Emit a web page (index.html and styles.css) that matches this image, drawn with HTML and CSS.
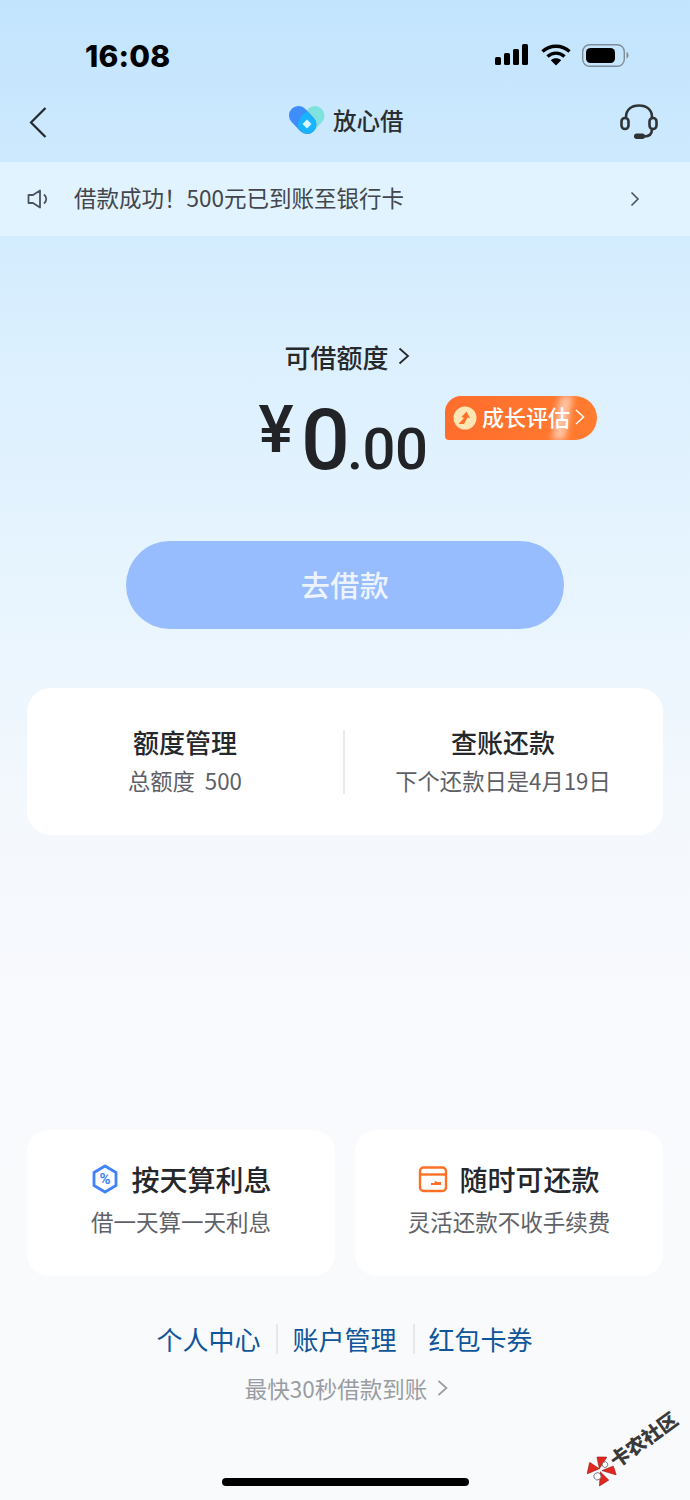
FILE: index.html
```html
<!DOCTYPE html>
<html lang="zh">
<head>
<meta charset="utf-8">
<title>放心借</title>
<link rel="stylesheet" href="styles.css">
</head>
<body>
<div class="page">
  <div class="status">
    <span class="time">16:08</span>
    <div class="status-icons">
      <svg width="34" height="22" viewBox="0 0 34 22"><g fill="#000"><rect x="0" y="13" width="6" height="8" rx="1.5"/><rect x="9" y="9" width="6" height="12" rx="1.5"/><rect x="18" y="5" width="6" height="16" rx="1.500"/><rect x="27" y="0" width="6" height="21" rx="1.500"/></g></svg>
      <svg class="wifi" width="30" height="22" viewBox="0 0 30 22"><g fill="none" stroke="#000" stroke-width="3.400"><path d="M1.500 7.500C9 .5 21 .5 28.500 7.500"/><path d="M6.500 12.500C11.500 8 18.500 8 23.500 12.500"/></g><path d="M9.800 16.200C13 13.600 17 13.600 20.200 16.200L15 21.500Z" fill="#000"/></svg>
      <svg class="batt" width="48" height="24" viewBox="0 0 48 24"><rect x=".7" y=".7" width="41.600" height="21.600" rx="7" fill="none" stroke="#7f8c99" stroke-width="1.400"/><rect x="4" y="4" width="29" height="15" rx="4.500" fill="#000"/><path d="M44.500 8v6.500c1.500-.5 2-2 2-3.200s-.5-2.800-2-3.300z" fill="#7f8c99"/></svg>
    </div>
  </div>

  <nav class="nav">
    <svg class="nav-back" width="20" height="32" viewBox="0 0 20 32"><path d="M17.500 2 3 16.500 17.500 31" fill="none" stroke="#25282c" stroke-width="2.200"/></svg>
    <div class="brand">
      <svg width="36" height="28" viewBox="0 0 36 28">
        <path d="M26 9.500 18 18.500" stroke="#7de3dc" stroke-width="19" stroke-linecap="round"/>
        <path d="M9.500 9.500 18 18.500" stroke="#3f8cfb" stroke-width="19" stroke-linecap="round"/>
        <path d="M18 5.500 26.500 14.500C28 19 27 24 22.500 26.500 19 28.300 15 27.600 12.500 25.500L9.200 22C8.500 17 9.500 11 18 5.500Z" fill="#19b4ff"/>
        <path d="M18 13.500 22.500 18 18 22.500 13.500 18Z" fill="#d9f6ff"/>
      </svg>
      <span class="brand-name">放心借</span>
    </div>
    <svg class="nav-help" width="38" height="36" viewBox="0 0 38 36"><g fill="none" stroke="#2f3336" stroke-width="2.600"><path d="M6 14V13C6 6 11 1.500 19 1.500S32 6 32 13v1"/><rect x="1.500" y="14" width="7" height="11" rx="3.500"/><rect x="29.500" y="14" width="7" height="11" rx="3.500"/><path d="M32 25c0 5-3 7.500-8 7.500"/></g><rect x="14" y="29.500" width="11" height="5.500" rx="2.700" fill="#2f3336"/></svg>
  </nav>

  <div class="notice">
    <svg width="22" height="20" viewBox="0 0 22 20"><path d="M1.500 6H6L13 1.500V18.500L6 14H1.500Z" fill="none" stroke="#4b5263" stroke-width="1.800" stroke-linejoin="round"/><path d="M17 5.500C20 8 20 12 17 14.500" fill="none" stroke="#4b5263" stroke-width="1.800"/></svg>
    <span class="notice-text">借款成功！500元已到账至银行卡</span>
    <svg class="chev-s" width="10" height="16" viewBox="0 0 10 16"><path d="M1.500 1.500 8 8l-6.500 6.500" fill="none" stroke="#4b5263" stroke-width="1.600"/></svg>
  </div>

  <section class="quota">
    <div class="quota-label">可借额度
      <svg width="12" height="18" viewBox="0 0 12 18"><path d="M1.500 1.500 10 9l-8.500 7.500" fill="none" stroke="#26292c" stroke-width="1.800"/></svg>
    </div>
    <div class="amount-row">
      <div class="amount"><span class="yen">¥</span><span class="int">0</span><span class="dec">.00</span></div>
      <div class="badge">
        <svg width="24" height="24" viewBox="0 0 24 24"><circle cx="12" cy="12" r="11.500" fill="#fde6b4"/><path d="M5.500 18 11 12 8.500 11 13.500 5.500 17 12 14.500 11.500 11 18Z" fill="#ff6f2c"/></svg>
        <span>成长评估</span>
        <svg width="10" height="16" viewBox="0 0 10 16"><path d="M1 1 8.500 8 1 15" fill="none" stroke="#fff" stroke-width="1.500"/></svg>
        <i class="shine"></i>
      </div>
    </div>
    <div class="cta">去借款</div>
  </section>

  <section class="summary">
    <div class="summary-col">
      <div class="col-title">额度管理</div>
      <div class="col-sub">总额度&nbsp; 500</div>
    </div>
    <div class="summary-col">
      <div class="col-title">查账还款</div>
      <div class="col-sub">下个还款日是4月19日</div>
    </div>
  </section>

  <section class="benefits">
    <div class="benefit">
      <div class="benefit-head">
        <svg width="30" height="30" viewBox="0 0 30 30"><path d="M15 2 26 8.500v13L15 28 4 21.500v-13Z" fill="#fff" stroke="#3f82fb" stroke-width="2.800" stroke-linejoin="round"/><text class="pct" x="15" y="20" text-anchor="middle">%</text></svg>
        <span>按天算利息</span>
      </div>
      <div class="benefit-sub">借一天算一天利息</div>
    </div>
    <div class="benefit">
      <div class="benefit-head">
        <svg width="30" height="28" viewBox="0 0 30 28"><rect x="2" y="2.500" width="26" height="23.500" rx="3.500" fill="none" stroke="#ff7026" stroke-width="2.400"/><path d="M2 9.500H28" stroke="#ff7026" stroke-width="2.400"/><path d="M13 20H23V17H19L17 15.500 16.500 18H13Z" fill="#ff7026"/></svg>
        <span>随时可还款</span>
      </div>
      <div class="benefit-sub">灵活还款不收手续费</div>
    </div>
  </section>

  <div class="links">
    <span class="link">个人中心</span>
    <span class="link">账户管理</span>
    <span class="link">红包卡券</span>
  </div>
  <div class="speed">最快30秒借款到账
    <svg width="11" height="16" viewBox="0 0 11 16"><path d="M1.500 1 9.500 8l-8 7" fill="none" stroke="#999da3" stroke-width="1.700"/></svg>
  </div>
  <div class="home-bar"></div>

  <div class="watermark">
    <svg width="26" height="26" viewBox="0 0 26 26"><g fill="#e3261f" stroke="#8a1512" stroke-width=".5"><path d="M0 8 9 0l4 11Z"/><path d="M13 11 18 0l8 6Z"/><path d="M3 25 12 14l2 12Z"/><path d="M14 14 26 17l-3 9Z"/></g><g fill="#fff" stroke="#555" stroke-width=".7"><circle cx="7" cy="16" r="3.600"/><circle cx="20" cy="11" r="2.800"/></g></svg>
    <span>卡农社区</span>
  </div>
</div>
</body>
</html>
```

FILE: styles.css
```css
* { box-sizing: border-box; }
html, body { margin: 0; padding: 0; }
body { font-family: "Noto Sans CJK SC", "Noto Sans", sans-serif; color: #24272b; }
.page {
  position: relative;
  width: 690px;
  height: 1500px;
  overflow: hidden;
  background: linear-gradient(180deg, #c2e4fd 0, #cde9fe 160px, #daeffe 330px, #e6f4fe 560px, #f3f8fd 800px, #f9fafd 1050px, #f9fafb 1500px);
}
.status { height: 94px; display: flex; justify-content: space-between; padding: 38px 60px 0 85px; }
.time { font-family: Inter, "Liberation Sans", sans-serif; font-weight: 800; font-size: 30px; line-height: 36px; color: #000; letter-spacing: .2px; }
.status-icons { display: flex; align-items: flex-start; gap: 12px; padding-top: 6px; }
.status-icons .batt { margin-left: -1px; }
.nav { height: 68px; display: flex; align-items: center; justify-content: space-between; padding: 0 32px 13px 28px; position: relative; }
.brand { display: flex; align-items: center; gap: 8px; position: absolute; left: 289px; top: 9px; }
.brand-name { font-size: 23.500px; font-weight: 500; line-height: 34px; color: #2a2d31; }
.notice { height: 74px; display: flex; align-items: center; padding: 0 50px 0 27px; background: #e1f3fe; }
.notice-text { flex: 1; margin: -4px 0 0 25px; font-size: 22.500px; line-height: 30px; color: #43464c; }
.quota { display: flex; flex-direction: column; align-items: center; }
.quota-label { margin-top: 102px; height: 36px; display: flex; align-items: center; gap: 9px; font-size: 26px; font-weight: 500; color: #26292c; margin-left: 4px; }
.amount-row { position: relative; width: 690px; height: 144px; margin-top: 2px; }
.amount { position: absolute; left: 258px; top: 19px; display: flex; align-items: baseline; font-family: Roboto, Inter, sans-serif; color: #212326; line-height: 90px; height: 90px; white-space: nowrap; }
.yen { font-family: Inter, sans-serif; font-size: 64px; font-weight: 600; margin-right: 7px; position: relative; bottom: 17px; }
.int { font-size: 86px; font-weight: 500; letter-spacing: -3px; }
.dec { font-size: 58px; font-weight: 500; letter-spacing: -.5px; }
.badge { position: absolute; left: 445px; top: 20px; width: 152px; height: 44px; padding: 0 0 4px 8px; border-radius: 16px 22px 22px 4px; display: flex; align-items: center; gap: 5px; background: linear-gradient(90deg, #ff6d2c, #ff7c30); color: #fff; font-size: 22px; font-weight: 500; overflow: hidden; }
.badge svg:first-child { margin-top: 4px; }
.badge svg:nth-of-type(2) { margin-top: 2px; }
.shine { position: absolute; left: 111px; top: 0; width: 13px; height: 44px; background: rgba(255,255,255,.55); transform: skewX(-10deg); filter: blur(3px); }
.cta { margin-top: 21px; width: 438px; height: 88px; border-radius: 44px; background: #97bdfe; color: #edf4ff; font-size: 29px; font-weight: 500; display: flex; align-items: center; justify-content: center; letter-spacing: .5px; padding-bottom: 2px; }
.summary { margin: 59px 27px 0; height: 147px; background: #fff; border-radius: 24px; display: flex; align-items: center; }
.summary-col { flex: 1; height: 64px; display: flex; flex-direction: column; align-items: center; justify-content: center; }
.summary-col + .summary-col { border-left: 2px solid #e8eaed; padding-right: 2px; }
.col-title { font-size: 26px; font-weight: 500; line-height: 34px; margin-top: -4px; }
.col-sub { font-size: 22.300px; line-height: 30px; color: #5d6066; margin-top: 6px; white-space: nowrap; }
.benefits { margin: 295px 27px 0; display: flex; gap: 20px; }
.benefit { flex: 1; height: 146px; background: #fff; border-radius: 22px; display: flex; flex-direction: column; align-items: center; padding-top: 29px; }
.benefit-head { display: flex; align-items: center; gap: 11px; height: 40px; font-size: 28px; font-weight: 500; line-height: 40px; color: #24272b; }
.pct { font-family: Roboto, sans-serif; font-size: 15px; font-weight: 700; fill: #3f82fb; }
.benefit-sub { margin-top: 7px; font-size: 22.500px; line-height: 30px; color: #5f6268; }
.links { margin-top: 48px; height: 30px; display: flex; justify-content: center; padding-right: 1px; }
.link { font-size: 26px; line-height: 30px; color: #0f5599; padding: 0 16px; letter-spacing: 0; }
.link + .link { border-left: 2px solid #e6e8ea; padding-left: 14px; }
.speed { margin-top: 16px; height: 36px; display: flex; align-items: center; justify-content: center; gap: 10px; font-size: 22.500px; color: #999da3; padding-left: 3px; }
.home-bar { position: absolute; left: 222px; top: 1478px; width: 247px; height: 8px; border-radius: 4px; background: #000; }
.watermark { position: absolute; left: 590px; top: 1465px; display: flex; align-items: center; gap: 1px; transform: rotate(-36deg); transform-origin: left center; font-size: 19.500px; font-weight: 900; line-height: 26px; color: #3a3a3c; white-space: nowrap; }
```
